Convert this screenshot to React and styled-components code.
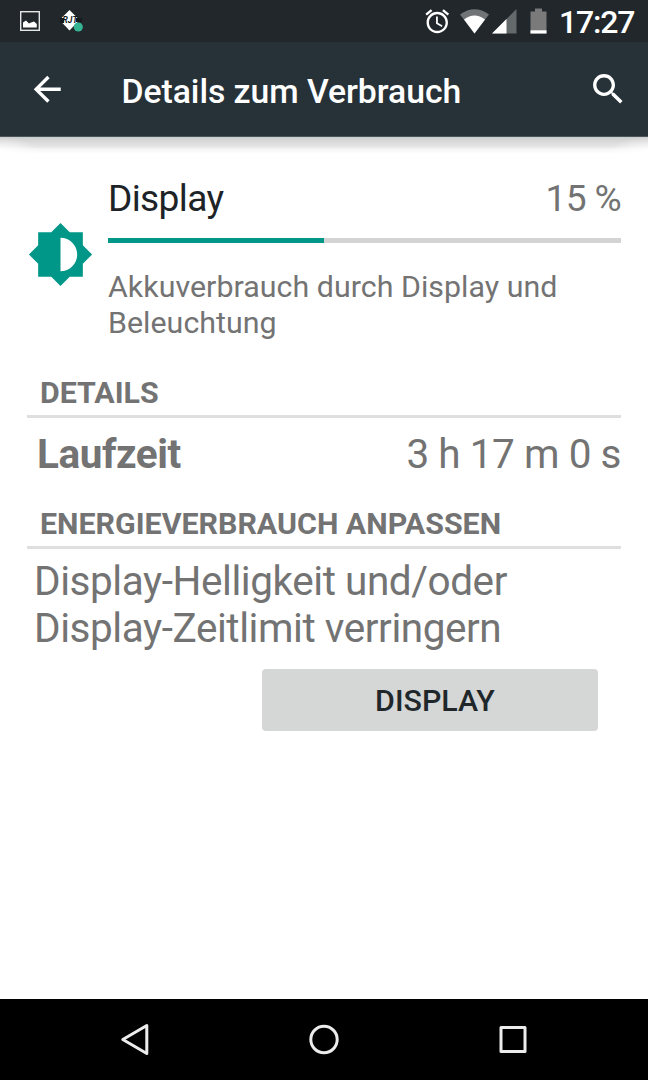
import React from "react";
import styled, { createGlobalStyle } from "styled-components";

const GlobalStyle = createGlobalStyle`
  * {
    box-sizing: border-box;
  }
  body {
    margin: 0;
    background: #fff;
    font-family: Roboto, "Liberation Sans", sans-serif;
    color: #737373;
  }
`;

const Screen = styled.div`
  display: flex;
  flex-direction: column;
  width: 648px;
  height: 1080px;
  overflow: hidden;
`;

const StatusBar = styled.div`
  display: flex;
  justify-content: space-between;
  height: 42px;
  padding: 0 13px 0 20px;
  background: #21272b;
`;

const StatusGroup = styled.div`
  display: flex;
  align-items: center;
`;

const Icon = styled.svg`
  display: block;
  flex: none;
  width: ${(props) => props.$w}px;
  height: ${(props) => props.$h || props.$w}px;
  margin-left: ${(props) => props.$gap || 0}px;
`;

const Clock = styled.span`
  width: 76px;
  margin-left: 12px;
  font-size: 32px;
  font-weight: 500;
  letter-spacing: -1.2px;
  line-height: 42px;
  padding-top: 1px;
  color: #fff;
`;

const Toolbar = styled.header`
  display: flex;
  align-items: center;
  height: 95px;
  padding: 0 20px 0 27px;
  background: #263238;
  border-bottom: 1px solid #4a5459;
`;

const Title = styled.h1`
  flex: 1;
  margin: 0;
  padding: 5px 0 0 54px;
  font-size: 33.75px;
  font-weight: 500;
  letter-spacing: -0.05px;
  line-height: 40px;
  color: #fff;
`;

const Content = styled.main`
  flex: 1;
  padding: 0 27px;
  background:
    radial-gradient(40px 16px at 0 16px, #fff, #fff0) no-repeat,
    radial-gradient(40px 16px at 100% 16px, #fff, #fff0) no-repeat,
    linear-gradient(#cdcfce, #d9dad9 5px, #e6e7e6 10px, #f5f5f5 12px, #fff 17px) no-repeat;
`;

const Usage = styled.section`
  display: flex;
  padding-top: 40px;
`;

const UsageIcon = styled.div`
  width: 81px;
  padding-top: 44px;
`;

const UsageBody = styled.div`
  flex: 1;
`;

const UsageHead = styled.div`
  display: flex;
  justify-content: space-between;
  font-size: 37.125px;
  letter-spacing: -0.65px;
  line-height: 44px;
`;

const Name = styled.span`
  color: #1d2327;
`;

const Track = styled.div`
  height: 5px;
  margin-top: 17px;
  background: #d4d4d4;
`;

const Fill = styled.div`
  height: 100%;
  background: #009688;
`;

const Description = styled.p`
  margin: 26px 0 0;
  font-size: 30.375px;
  letter-spacing: 0.03px;
  line-height: 35.5px;
`;

const SectionTitle = styled.h2`
  margin: ${(props) => props.$top}px 0 0;
  padding: 0 0 4px 13px;
  border-bottom: 3px solid #dfdfdf;
  font-size: 30.375px;
  font-weight: 700;
  line-height: 36px;
`;

const Row = styled.div`
  display: flex;
  justify-content: space-between;
  padding: 12px 0 0 10px;
  font-size: 40.5px;
  letter-spacing: -0.45px;
  line-height: 48px;
`;

const Label = styled.span`
  font-weight: 700;
`;

const Hint = styled.p`
  margin: 9px 0 0;
  padding-left: 7px;
  font-size: 40.5px;
  letter-spacing: -0.44px;
  line-height: 46.5px;
`;

const Button = styled.button`
  display: block;
  width: 336px;
  height: 62px;
  margin: 18px 23px 0 auto;
  padding: 1px 0 0 10px;
  border: 0;
  border-radius: 4px;
  background: #d5d7d6;
  color: #1f272b;
  font-family: inherit;
  font-size: 30.375px;
  font-weight: 500;
`;

const NavBar = styled.nav`
  display: flex;
  align-items: center;
  justify-content: center;
  gap: 149px;
  height: 81px;
  background: #000;
`;

const PictureIcon = () => (
  <Icon $w={20} viewBox="0 0 20 20">
    <rect x="0.7" y="0.7" width="18.6" height="18.6" fill="none" stroke="#e4e5e5" strokeWidth="1.4" />
    <path d="M3 16.5V11.5L6 9.5l3 3 2-1 3-1 2.8 2.5v3.5z" fill="#fff" />
  </Icon>
);

const BadgeIcon = () => (
  <Icon $w={24} $h={24} $gap={20} viewBox="0 0 24 24">
    <path d="M9.5 1L19.5 11l-10 10.5L-0.5 11z" fill="#fff" />
    <path d="M0 9h4v5H0zM16 9h6v4h-6z" fill="#171b1e" />
    <text x="10" y="14" textAnchor="middle" fontSize="8.5" fontStyle="italic" fontWeight="700" fill="#171b1e">RJT</text>
    <circle cx="18.3" cy="18" r="4.6" fill="#35b392" />
  </Icon>
);

const AlarmIcon = () => (
  <Icon $w={28.5} viewBox="0 0 24 24" fill="#fff">
    <path d="M22 5.72l-4.6-3.86-1.29 1.53 4.6 3.86L22 5.72zM7.88 3.39L6.6 1.86 2 5.71l1.29 1.53 4.59-3.85zM12.5 8H11v6l4.75 2.85.75-1.23-4-2.37V8zM12 4c-4.97 0-9 4.03-9 9s4.02 9 9 9c4.97 0 9-4.03 9-9s-4.03-9-9-9zm0 16c-3.87 0-7-3.13-7-7s3.13-7 7-7 7 3.13 7 7-3.13 7-7 7z" />
  </Icon>
);

const WifiIcon = () => (
  <Icon $w={29} $h={25} $gap={9} viewBox="0 0 29 25">
    <path d="M14.5 24.5L0 5.5Q14.5-5 29 5.5z" fill="#707477" />
    <path d="M14.5 24.5L4 10.5Q14.5 2.5 25 10.5z" fill="#fff" />
  </Icon>
);

const SignalIcon = () => (
  <Icon $w={25} $h={25} $gap={3} viewBox="0 0 25 25">
    <path d="M0 24.5L24.5 0v24.5z" fill="#64696c" />
    <path d="M0 24.5L14.5 10v14.5z" fill="#fff" />
  </Icon>
);

const BatteryIcon = () => (
  <Icon $w={17} $h={26} $gap={13} viewBox="0 0 17 26">
    <path d="M0.5 3.5H5V0.5h7v3h4.5v22H0.5z" fill="#7a7a7a" />
    <path d="M0.5 22.3h16v3.2h-16z" fill="#fff" />
  </Icon>
);

const BackIcon = () => (
  <Icon $w={40.5} viewBox="0 0 24 24" fill="#fff">
    <path d="M20 11H7.83l5.59-5.59L12 4l-8 8 8 8 1.41-1.41L7.83 13H20v-2z" />
  </Icon>
);

const SearchIcon = () => (
  <Icon $w={40.5} viewBox="0 0 24 24" fill="#fff">
    <path d="M15.5 14h-.79l-.28-.27C15.41 12.59 16 11.11 16 9.5 16 5.91 13.09 3 9.5 3S3 5.91 3 9.5 5.91 16 9.5 16c1.61 0 3.09-.59 4.23-1.57l.27.28v.79l5 4.99L20.49 19l-4.99-5zm-6 0C7.01 14 5 11.99 5 9.5S7.01 5 9.5 5 14 7.01 14 9.5 11.99 14 9.5 14z" />
  </Icon>
);

const BrightnessIcon = () => (
  <Icon $w={67} viewBox="0 0 24 24" fill="#009688">
    <path d="M20 15.31L23.31 12 20 8.69V4h-4.69L12 .69 8.69 4H4v4.69L.69 12 4 15.31V20h4.69L12 23.31 15.31 20H20v-4.69zM12 18V6c3.31 0 6 2.69 6 6s-2.69 6-6 6z" />
  </Icon>
);

const navShapes = [
  <path d="M31.8 4.5v28L7.8 18.5z" />,
  <circle cx="20" cy="18.5" r="13.2" />,
  <rect x="8" y="6.5" width="24" height="24" />,
];

const App = () => {
  const percent = 15;
  // bar is scaled against the biggest consumer, not against 100
  const maxPercent = 35.6;

  return (
    <Screen>
      <GlobalStyle />
      <StatusBar>
        <StatusGroup>
          <PictureIcon />
          <BadgeIcon />
        </StatusGroup>
        <StatusGroup>
          <AlarmIcon />
          <WifiIcon />
          <SignalIcon />
          <BatteryIcon />
          <Clock>17:27</Clock>
        </StatusGroup>
      </StatusBar>
      <Toolbar>
        <BackIcon />
        <Title>Details zum Verbrauch</Title>
        <SearchIcon />
      </Toolbar>
      <Content>
        <Usage>
          <UsageIcon>
            <BrightnessIcon />
          </UsageIcon>
          <UsageBody>
            <UsageHead>
              <Name>Display</Name>
              <span>{percent} %</span>
            </UsageHead>
            <Track>
              <Fill style={{ width: `${(percent / maxPercent) * 100}%` }} />
            </Track>
            <Description>
              Akkuverbrauch durch Display und Beleuchtung
            </Description>
          </UsageBody>
        </Usage>
        <SectionTitle $top={35}>DETAILS</SectionTitle>
        <Row>
          <Label>Laufzeit</Label>
          <span>3 h 17 m 0 s</span>
        </Row>
        <SectionTitle $top={28}>ENERGIEVERBRAUCH ANPASSEN</SectionTitle>
        <Hint>
          Display-Helligkeit und/oder
          <br />
          Display-Zeitlimit verringern
        </Hint>
        <Button>DISPLAY</Button>
      </Content>
      <NavBar>
        {navShapes.map((shape, i) => (
          <Icon key={i} $w={40} $h={37} viewBox="0 0 40 37" fill="none" stroke="#ececec" strokeWidth="3" strokeLinejoin="round">
            {shape}
          </Icon>
        ))}
      </NavBar>
    </Screen>
  );
};

export default App;
